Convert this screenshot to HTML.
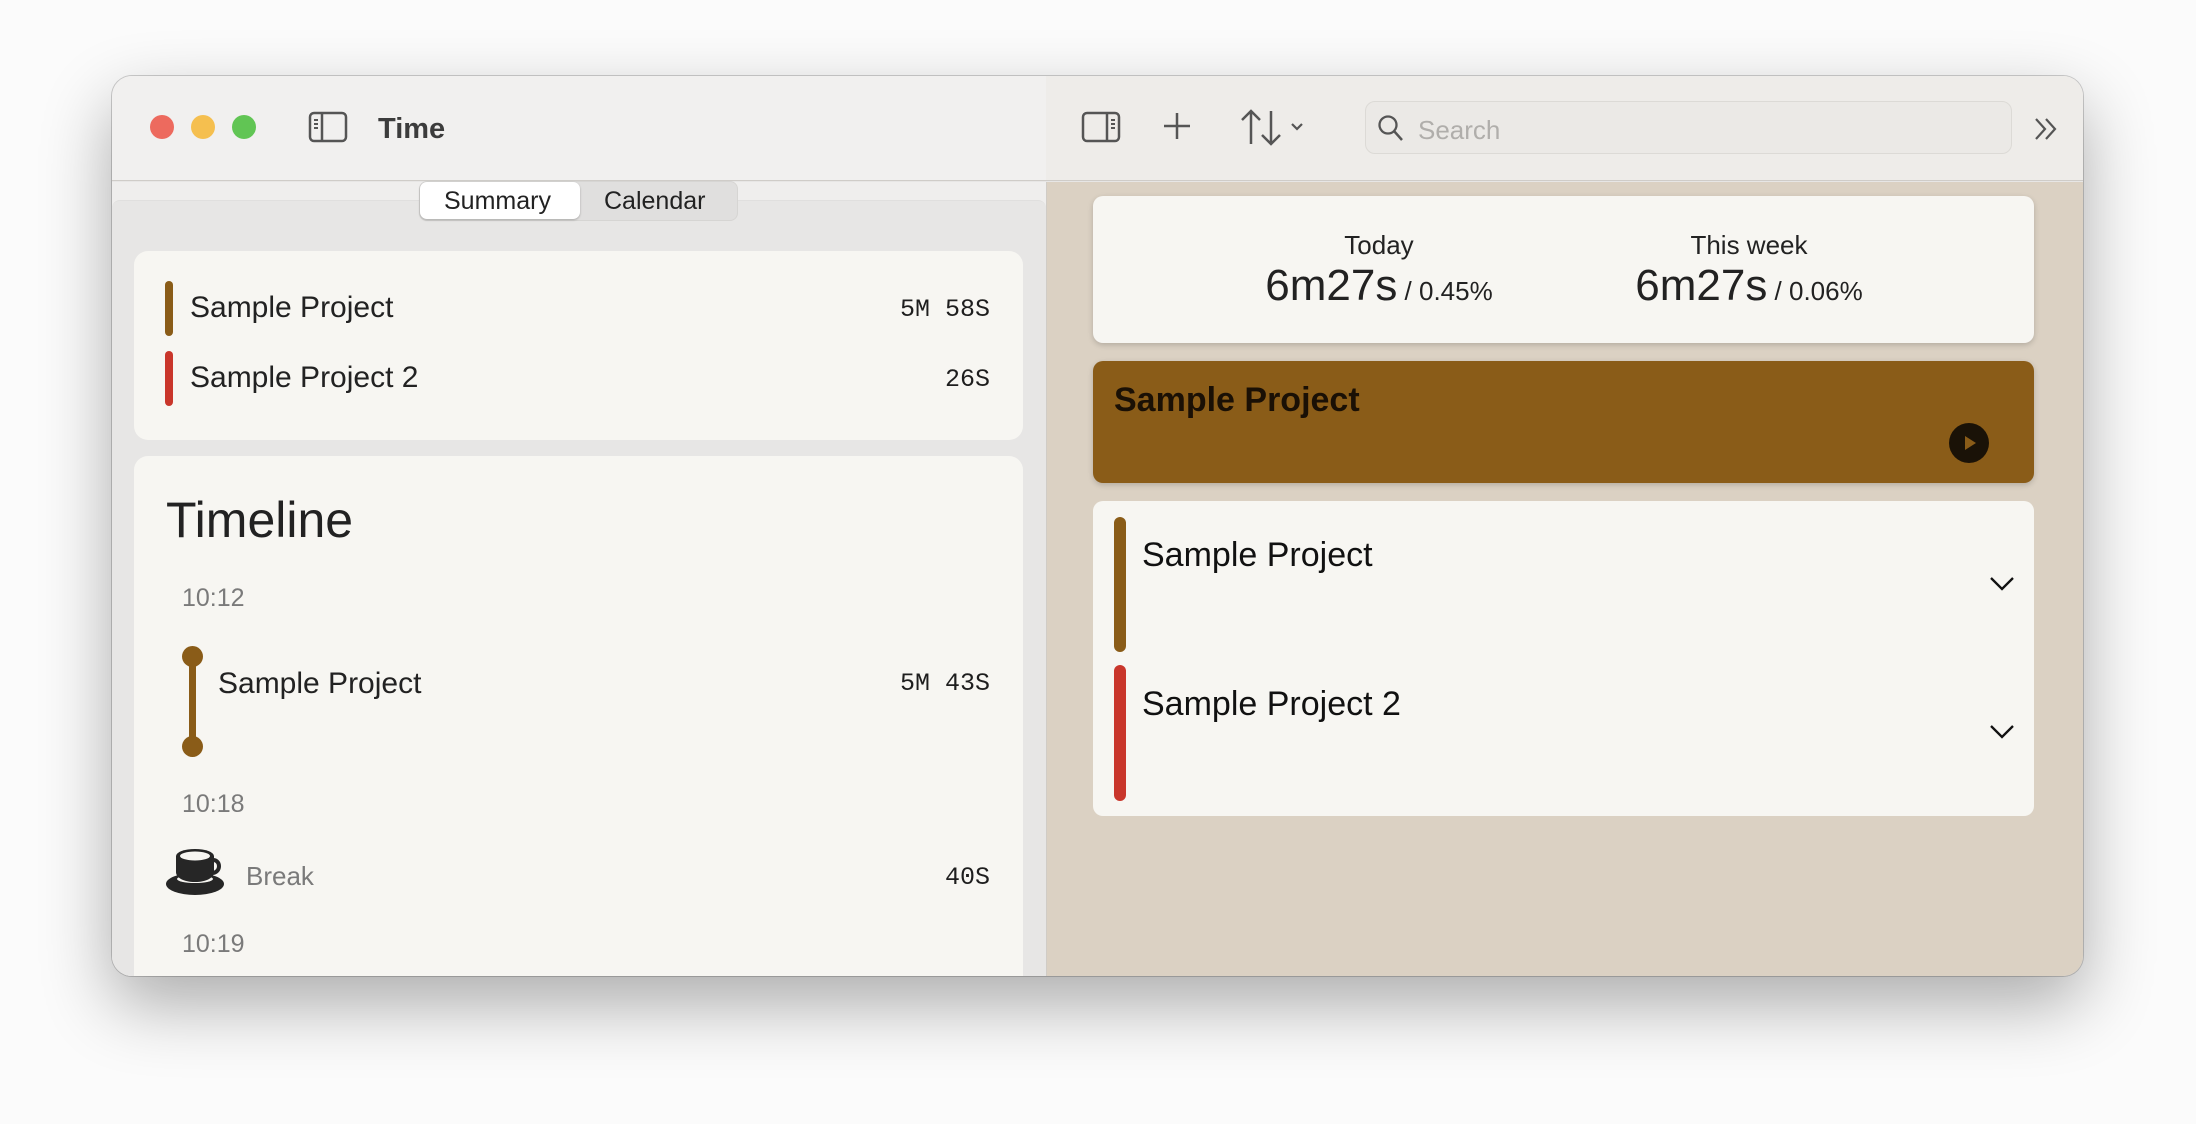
<!DOCTYPE html>
<html><head><meta charset="utf-8"><style>
*{margin:0;padding:0;box-sizing:border-box}
body{width:2196px;height:1124px;background:#fbfbfb;position:relative;overflow:hidden;font-family:"Liberation Sans",sans-serif}
.a{position:absolute;line-height:1;white-space:nowrap}
.win{position:absolute;left:112px;top:76px;width:1971px;height:900px;border-radius:20px;overflow:hidden;box-shadow:0 28px 70px rgba(0,0,0,.32),0 0 0 1px rgba(0,0,0,.18);background:#e7e6e5}
.mono{font-family:"Liberation Mono",monospace;color:#1e1e1e}
</style></head><body>
<div class="win">
  <div class="a" style="left:0;top:0;width:1971px;height:105px;background:#f1f0ef;border-bottom:1px solid #cfccc8"></div>
  <div class="a" style="left:934px;top:0;width:1037px;height:105px;background:#eeece9;border-bottom:1px solid #cfccc8"></div>
  <div class="a" style="left:38px;top:39px;width:24px;height:24px;border-radius:50%;background:#ed6a5e"></div>
  <div class="a" style="left:79px;top:39px;width:24px;height:24px;border-radius:50%;background:#f5bf4f"></div>
  <div class="a" style="left:120px;top:39px;width:24px;height:24px;border-radius:50%;background:#61c554"></div>
  <svg class="a" style="left:196px;top:35px" width="40" height="32" viewBox="0 0 40 32"><rect x="2" y="2" width="36" height="28" rx="4" fill="none" stroke="#555" stroke-width="2.5"/><line x1="14" y1="2" x2="14" y2="30" stroke="#555" stroke-width="2.5"/><path d="M6 9h4M6 13h4M6 17h4" stroke="#555" stroke-width="2"/></svg>
  <div class="a" style="left:266px;top:39px;font-size:29px;font-weight:bold;color:#3c3c3c">Time</div>
  <svg class="a" style="left:969px;top:35px" width="40" height="32" viewBox="0 0 40 32"><rect x="2" y="2" width="36" height="28" rx="4" fill="none" stroke="#555" stroke-width="2.5"/><line x1="26" y1="2" x2="26" y2="30" stroke="#555" stroke-width="2.5"/><path d="M30 9h4M30 13h4M30 17h4" stroke="#555" stroke-width="2"/></svg>
  <svg class="a" style="left:1050px;top:35px" width="30" height="30" viewBox="0 0 30 30"><path d="M15 2v26M2 15h26" stroke="#555" stroke-width="2.5"/></svg>
  <svg class="a" style="left:1128px;top:32px" width="70" height="38" viewBox="0 0 70 38"><path d="M11 36V3M2 12l9-9 9 9M31 3v33M22 27l9 9 9-9" fill="none" stroke="#555" stroke-width="2.5"/><path d="M52 16l5 5 5-5" fill="none" stroke="#555" stroke-width="2.2"/></svg>
  <div class="a" style="left:1253px;top:25px;width:647px;height:53px;border-radius:10px;background:#ebe9e6;border:1.5px solid #dcdad6"></div>
  <svg class="a" style="left:1265px;top:38px" width="28" height="30" viewBox="0 0 28 30"><circle cx="11" cy="11" r="8.5" fill="none" stroke="#555" stroke-width="2.3"/><path d="M17 17l8 9" stroke="#555" stroke-width="2.5"/></svg>
  <div class="a" style="left:1306px;top:41px;font-size:26px;color:#b0aeab">Search</div>
  <svg class="a" style="left:1920px;top:40px" width="28" height="26" viewBox="0 0 28 26"><path d="M4 3l9 10-9 10M14 3l9 10-9 10" fill="none" stroke="#555" stroke-width="2.2"/></svg>

  <div class="a" style="left:0;top:106px;width:934px;height:794px;background:#efeeed"></div>
  <div class="a" style="left:0;top:124px;width:934px;height:776px;background:#e7e6e5;border-top:1px solid #e0dfde;border-radius:8px 8px 0 0"></div>
  <div class="a" style="left:307px;top:105px;width:319px;height:40px;border-radius:8px;background:#e0dfde;border:1px solid #d6d5d3"></div>
  <div class="a" style="left:308px;top:106px;width:160px;height:37px;border-radius:7px;background:#fff;box-shadow:0 1px 2px rgba(0,0,0,.25)"></div>
  <div class="a" style="left:332px;top:113px;font-size:25px;color:#222">Summary</div>
  <div class="a" style="left:492px;top:113px;font-size:25px;color:#222">Calendar</div>

  <div class="a" style="left:22px;top:175px;width:889px;height:189px;border-radius:14px;background:#f7f6f2"></div>
  <div class="a" style="left:53px;top:205px;width:8px;height:55px;border-radius:4px;background:#8a5c18"></div>
  <div class="a" style="left:78px;top:217px;font-size:30px;color:#222">Sample Project</div>
  <div class="a mono" style="left:773px;top:221px;width:105px;text-align:right;font-size:25px">5M 58S</div>
  <div class="a" style="left:53px;top:275px;width:8px;height:55px;border-radius:4px;background:#c9362b"></div>
  <div class="a" style="left:78px;top:287px;font-size:30px;color:#222">Sample Project 2</div>
  <div class="a mono" style="left:773px;top:291px;width:105px;text-align:right;font-size:25px">26S</div>

  <div class="a" style="left:22px;top:380px;width:889px;height:560px;border-radius:14px;background:#f7f6f2"></div>
  <div class="a" style="left:54px;top:419px;font-size:50px;color:#222">Timeline</div>
  <div class="a" style="left:70px;top:510px;font-size:25px;color:#7a7a7a">10:12</div>
  <div class="a" style="left:77px;top:571px;width:7px;height:106px;background:#8a5c18"></div>
  <div class="a" style="left:70px;top:570px;width:21px;height:21px;border-radius:50%;background:#8a5c18"></div>
  <div class="a" style="left:70px;top:660px;width:21px;height:21px;border-radius:50%;background:#8a5c18"></div>
  <div class="a" style="left:106px;top:593px;font-size:30px;color:#222">Sample Project</div>
  <div class="a mono" style="left:773px;top:595px;width:105px;text-align:right;font-size:25px">5M 43S</div>
  <div class="a" style="left:70px;top:716px;font-size:25px;color:#7a7a7a">10:18</div>
  <svg class="a" style="left:53px;top:772px" width="62" height="48" viewBox="0 0 62 48"><ellipse cx="30" cy="36" rx="29" ry="11" fill="#262626"/><ellipse cx="30" cy="31" rx="18" ry="4" fill="#f7f6f2"/><path d="M11 8h38v16c0 6-8 10-19 10S11 30 11 24z" fill="#262626"/><ellipse cx="30" cy="8" rx="19" ry="7" fill="#262626"/><ellipse cx="30" cy="8" rx="15" ry="4.5" fill="#f7f6f2"/><path d="M48 12c8 0 8 12 0 13" fill="none" stroke="#262626" stroke-width="4"/></svg>
  <div class="a" style="left:134px;top:787px;font-size:26px;color:#7a7a7a">Break</div>
  <div class="a mono" style="left:773px;top:789px;width:105px;text-align:right;font-size:25px">40S</div>
  <div class="a" style="left:70px;top:856px;font-size:25px;color:#7a7a7a">10:19</div>

  <div class="a" style="left:934px;top:106px;width:1037px;height:794px;background:#dbd1c3;border-left:1px solid #d0ccc6"></div>
  <div class="a" style="left:981px;top:120px;width:941px;height:147px;border-radius:10px;background:#f7f6f2;box-shadow:0 2px 6px rgba(0,0,0,.18)"></div>
  <div class="a" style="left:1167px;top:156px;width:200px;text-align:center;font-size:26px;color:#222">Today</div>
  <div class="a" style="left:1087px;top:188px;width:360px;text-align:center;color:#222"><span style="font-size:44px">6m27s</span><span style="font-size:26px"> / 0.45%</span></div>
  <div class="a" style="left:1537px;top:156px;width:200px;text-align:center;font-size:26px;color:#222">This week</div>
  <div class="a" style="left:1457px;top:188px;width:360px;text-align:center;color:#222"><span style="font-size:44px">6m27s</span><span style="font-size:26px"> / 0.06%</span></div>

  <div class="a" style="left:981px;top:285px;width:941px;height:122px;border-radius:10px;background:#8a5c18;box-shadow:0 2px 6px rgba(0,0,0,.18)"></div>
  <div class="a" style="left:1002px;top:307px;font-size:34px;font-weight:bold;color:#1a1005">Sample Project</div>
  <div class="a" style="left:1837px;top:347px;width:40px;height:40px;border-radius:50%;background:#1a1207"></div>
  <svg class="a" style="left:1837px;top:347px" width="40" height="40" viewBox="0 0 40 40"><path d="M16 13l11 7-11 7z" fill="#8a5c18"/></svg>

  <div class="a" style="left:981px;top:425px;width:941px;height:315px;border-radius:10px;background:#f7f6f2"></div>
  <div class="a" style="left:1002px;top:441px;width:12px;height:135px;border-radius:6px;background:#8a5c18"></div>
  <div class="a" style="left:1030px;top:462px;font-size:34px;color:#111">Sample Project</div>
  <svg class="a" style="left:1877px;top:500px" width="26" height="16" viewBox="0 0 26 16"><path d="M2 2l11 11L24 2" fill="none" stroke="#111" stroke-width="2.3"/></svg>
  <div class="a" style="left:1002px;top:589px;width:12px;height:136px;border-radius:6px;background:#c9362b"></div>
  <div class="a" style="left:1030px;top:611px;font-size:34px;color:#111">Sample Project 2</div>
  <svg class="a" style="left:1877px;top:648px" width="26" height="16" viewBox="0 0 26 16"><path d="M2 2l11 11L24 2" fill="none" stroke="#111" stroke-width="2.3"/></svg>
</div>
</body></html>
